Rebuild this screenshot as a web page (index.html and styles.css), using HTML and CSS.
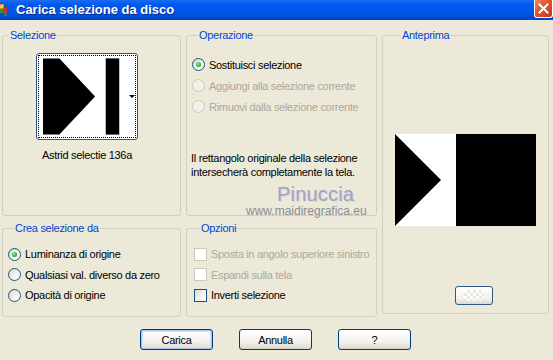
FILE: index.html
```html
<!DOCTYPE html>
<html lang="it">
<head>
    <meta charset="UTF-8">
    <title>Carica selezione da disco</title>
    <link rel="stylesheet" href="styles.css">
</head>
<body>
    <div class="window">
        <div class="titlebar">
            <svg class="app-icon" width="14" height="14" viewBox="0 0 14 14">
                <rect x="0" y="1" width="6" height="5" fill="#e08a2c"/>
                <rect x="2" y="2" width="3" height="3" fill="#f6c26a"/>
                <rect x="0" y="6" width="5" height="4" fill="#3a8f2f"/>
                <rect x="5" y="5" width="4" height="5" fill="#c0392b"/>
                <rect x="6" y="10" width="3" height="3" fill="#2f6f9a"/>
                <rect x="8" y="2" width="2" height="3" fill="#7a4a1c"/>
            </svg>
            <span class="title">Carica selezione da disco</span>
            <div class="close-btn">
                <svg width="11" height="11" viewBox="0 0 11 11">
                    <path d="M1.5 1.5 L9.5 9.5 M9.5 1.5 L1.5 9.5" stroke="#fff" stroke-width="2" stroke-linecap="square"/>
                </svg>
            </div>
        </div>

        <div class="panels">
            <fieldset class="group group-sel">
                <legend>Selezione</legend>
                <div class="thumb-wrap">
                    <div class="thumb">
                        <div class="thumb-focus">
                            <svg width="86" height="79" viewBox="0 0 86 79">
                                <rect width="86" height="79" fill="#fff"/>
                                <polygon points="0,0 17,0 54,39.5 17,79 0,79" fill="#000"/>
                                <rect x="65" y="0" width="14" height="79" fill="#000"/>
                            </svg>
                            <span class="drop-arrow"></span>
                        </div>
                    </div>
                    <div class="thumb-label">Astrid selectie 136a</div>
                </div>
            </fieldset>

            <fieldset class="group group-op">
                <legend>Operazione</legend>
                <div class="option"><span class="radio checked"></span>Sostituisci selezione</div>
                <div class="option disabled"><span class="radio"></span>Aggiungi alla selezione corrente</div>
                <div class="option disabled"><span class="radio"></span>Rimuovi dalla selezione corrente</div>
                <p class="note">Il rettangolo originale della selezione intersecherà completamente la tela.</p>
            </fieldset>

            <fieldset class="group group-preview">
                <legend>Anteprima</legend>
                <svg class="preview" width="141" height="92" viewBox="0 0 141 92">
                    <rect width="141" height="92" fill="#fff"/>
                    <polygon points="0,0 46,46 0,92" fill="#000"/>
                    <rect x="61" y="0" width="80" height="92" fill="#000"/>
                </svg>
                <div class="bg-btn"><span class="checker"></span></div>
            </fieldset>

            <fieldset class="group group-source">
                <legend>Crea selezione da</legend>
                <div class="option row"><span class="radio checked"></span>Luminanza di origine</div>
                <div class="option row"><span class="radio"></span>Qualsiasi val. diverso da zero</div>
                <div class="option row"><span class="radio"></span>Opacità di origine</div>
            </fieldset>

            <fieldset class="group group-options">
                <legend>Opzioni</legend>
                <div class="option row disabled"><span class="check"></span>Sposta in angolo superiore sinistro</div>
                <div class="option row disabled"><span class="check"></span>Espandi sulla tela</div>
                <div class="option row"><span class="check"></span>Inverti selezione</div>
            </fieldset>
        </div>

        <div class="buttons">
            <button class="btn default">Carica</button>
            <button class="btn">Annulla</button>
            <button class="btn">?</button>
        </div>

        <!-- watermark sits over the dialog -->
        <div class="watermark">
            <div class="wm-name">Pinuccia</div>
            <div class="wm-site">www.maidiregrafica.eu</div>
        </div>
    </div>
</body>
</html>
```

FILE: styles.css
```css
body {
    margin: 0;
    background-color: #ECE9D8;
}
.window {
    position: relative;
    width: 553px;
    height: 360px;
    overflow: hidden;
    background-color: #ECE9D8;
    font-family: "Liberation Sans", Arial, sans-serif;
    font-size: 11px;
    letter-spacing: -0.3px;
    color: #000;
}

/* title bar */
.titlebar {
    height: 19px;
    display: flex;
    align-items: center;
    background: linear-gradient(#1C6CF2, #0058EE 25%, #0055E5 70%, #0048CC);
    border-bottom: 1px solid #0A3FB8;
}
.app-icon {
    margin-left: -2px;
    flex: none;
}
.title {
    margin-left: 4px;
    color: #fff;
    font-weight: bold;
    font-size: 13px;
    letter-spacing: 0;
    text-shadow: 1px 1px 0 #0A2A8A;
}
.close-btn {
    margin-left: auto;
    margin-right: 0;
    margin-top: -2px;
    width: 19px;
    height: 18px;
    box-sizing: border-box;
    border: 1px solid #fff;
    border-top: none;
    border-radius: 0 0 3px 3px;
    background: linear-gradient(135deg, #F08A60, #E0532C 45%, #C43A18);
    display: flex;
    align-items: center;
    justify-content: center;
}

/* group boxes */
.panels {
    display: grid;
    grid-template-columns: 179px 191px 167px;
    grid-template-rows: 187px 95px;
    column-gap: 5px;
    row-gap: 6px;
    padding: 9px 0 0 2px;
}
.group {
    margin: 0;
    padding: 0;
    min-width: 0;
    border: 1px solid #D0D0BF;
    border-radius: 3px;
    box-sizing: border-box;
}
.group legend {
    margin-left: 6px;
    padding: 0 1px;
    line-height: 13px;
    color: #0046D5;
}
.group-sel { grid-column: 1; grid-row: 1; }
.group-op {
    grid-column: 2;
    grid-row: 1;
    padding: 12px 0 0 5px;
}
.group-preview {
    grid-column: 3;
    grid-row: 1 / span 2;
    height: 285px;
    padding: 92px 0 0 12px;
}
.group-source {
    grid-column: 1;
    grid-row: 2;
    padding: 9px 0 0 5px;
}
.group-options {
    grid-column: 2;
    grid-row: 2;
    padding: 9px 0 0 7px;
}

/* selection thumbnail */
.thumb-wrap {
    width: 102px;
    margin: 11px 0 0 33px;
}
.thumb {
    height: 87px;
    box-sizing: border-box;
    border: 1px solid #2B5685;
    border-radius: 3px;
    background: #fff;
    padding: 1px;
}
.thumb-focus {
    height: 100%;
    box-sizing: border-box;
    border: 1px dotted #000;
    display: flex;
    align-items: center;
    padding-left: 4px;
}
.thumb-focus svg { display: block; }
.drop-arrow {
    margin-left: 3px;
    margin-top: -1px;
    width: 0;
    height: 0;
    border-left: 3px solid transparent;
    border-right: 3px solid transparent;
    border-top: 3px solid #000;
}
.thumb-label {
    margin-top: 8px;
    line-height: 14px;
    text-align: center;
    white-space: nowrap;
}

/* radios and checkboxes */
.option {
    height: 21px;
    display: flex;
    align-items: center;
    gap: 4px;
    white-space: nowrap;
}
.option.row { height: 20.5px; }
.option.disabled { color: #ACA899; }
.radio {
    flex: none;
    width: 13px;
    height: 13px;
    box-sizing: border-box;
    border: 1px solid #1C5180;
    border-radius: 50%;
    background: linear-gradient(135deg, #D6D3C6, #F4F3EE 55%, #FFFFFF);
    display: flex;
    align-items: center;
    justify-content: center;
}
.radio.checked::after {
    content: "";
    width: 5px;
    height: 5px;
    border-radius: 50%;
    background: radial-gradient(circle at 40% 40%, #A4EAA4, #2CAF2C 60%, #1E901E);
}
.option.disabled .radio {
    border-color: #CAC8BB;
    background: #F2F1E9;
}
.check {
    flex: none;
    width: 13px;
    height: 13px;
    box-sizing: border-box;
    border: 1px solid #1C5180;
    background: linear-gradient(135deg, #DCDAD0, #F6F5F0 60%, #FFFFFF);
}
.option.disabled .check {
    border-color: #CAC8BB;
    background: #FFFFFF;
}
.note {
    margin: 34px 0 0 -1px;
    line-height: 14px;
}

/* preview */
.preview { display: block; }
.bg-btn {
    margin: 60px 0 0 60px;
    width: 38px;
    height: 19px;
    box-sizing: border-box;
    border: 1px solid #2B5685;
    border-radius: 3px;
    background: linear-gradient(#FFFFFF, #F1F0EB 70%, #DCD8CC);
    display: flex;
    align-items: center;
    justify-content: center;
}
.checker {
    width: 20px;
    height: 11px;
    background: repeating-conic-gradient(#E6E6E6 0 25%, #FFFFFF 0 50%) 0 0 / 6px 6px;
    opacity: 0.8;
}

/* dialog buttons */
.buttons {
    display: flex;
    justify-content: center;
    gap: 26px;
    margin-top: 12px;
    padding-right: 2px;
}
.btn {
    width: 73px;
    height: 21px;
    padding: 0;
    border: 1px solid #003C74;
    border-radius: 3px;
    background: linear-gradient(#FFFFFF, #F3F2EE 60%, #E3DFD4 90%, #D6D0C5);
    font-family: "Liberation Sans", Arial, sans-serif;
    font-size: 11px;
    letter-spacing: -0.3px;
    color: #000;
}
.btn.default {
    box-shadow: inset 0 0 0 1px #A9C6F5, inset 0 0 0 2px #CFE2FC;
}

/* watermark */
.watermark {
    position: absolute;
    left: 246px;
    top: 184px;
    width: 124px;
    pointer-events: none;
}
.wm-name {
    padding-left: 31px;
    font-size: 20px;
    line-height: 20px;
    letter-spacing: 0.2px;
    color: #A2A2C0;
    text-shadow: 1px 1px 0 #D6D4E2;
}
.wm-site {
    margin-top: 1px;
    font-size: 12px;
    line-height: 12px;
    letter-spacing: 0;
    color: #8C8C94;
}
```
